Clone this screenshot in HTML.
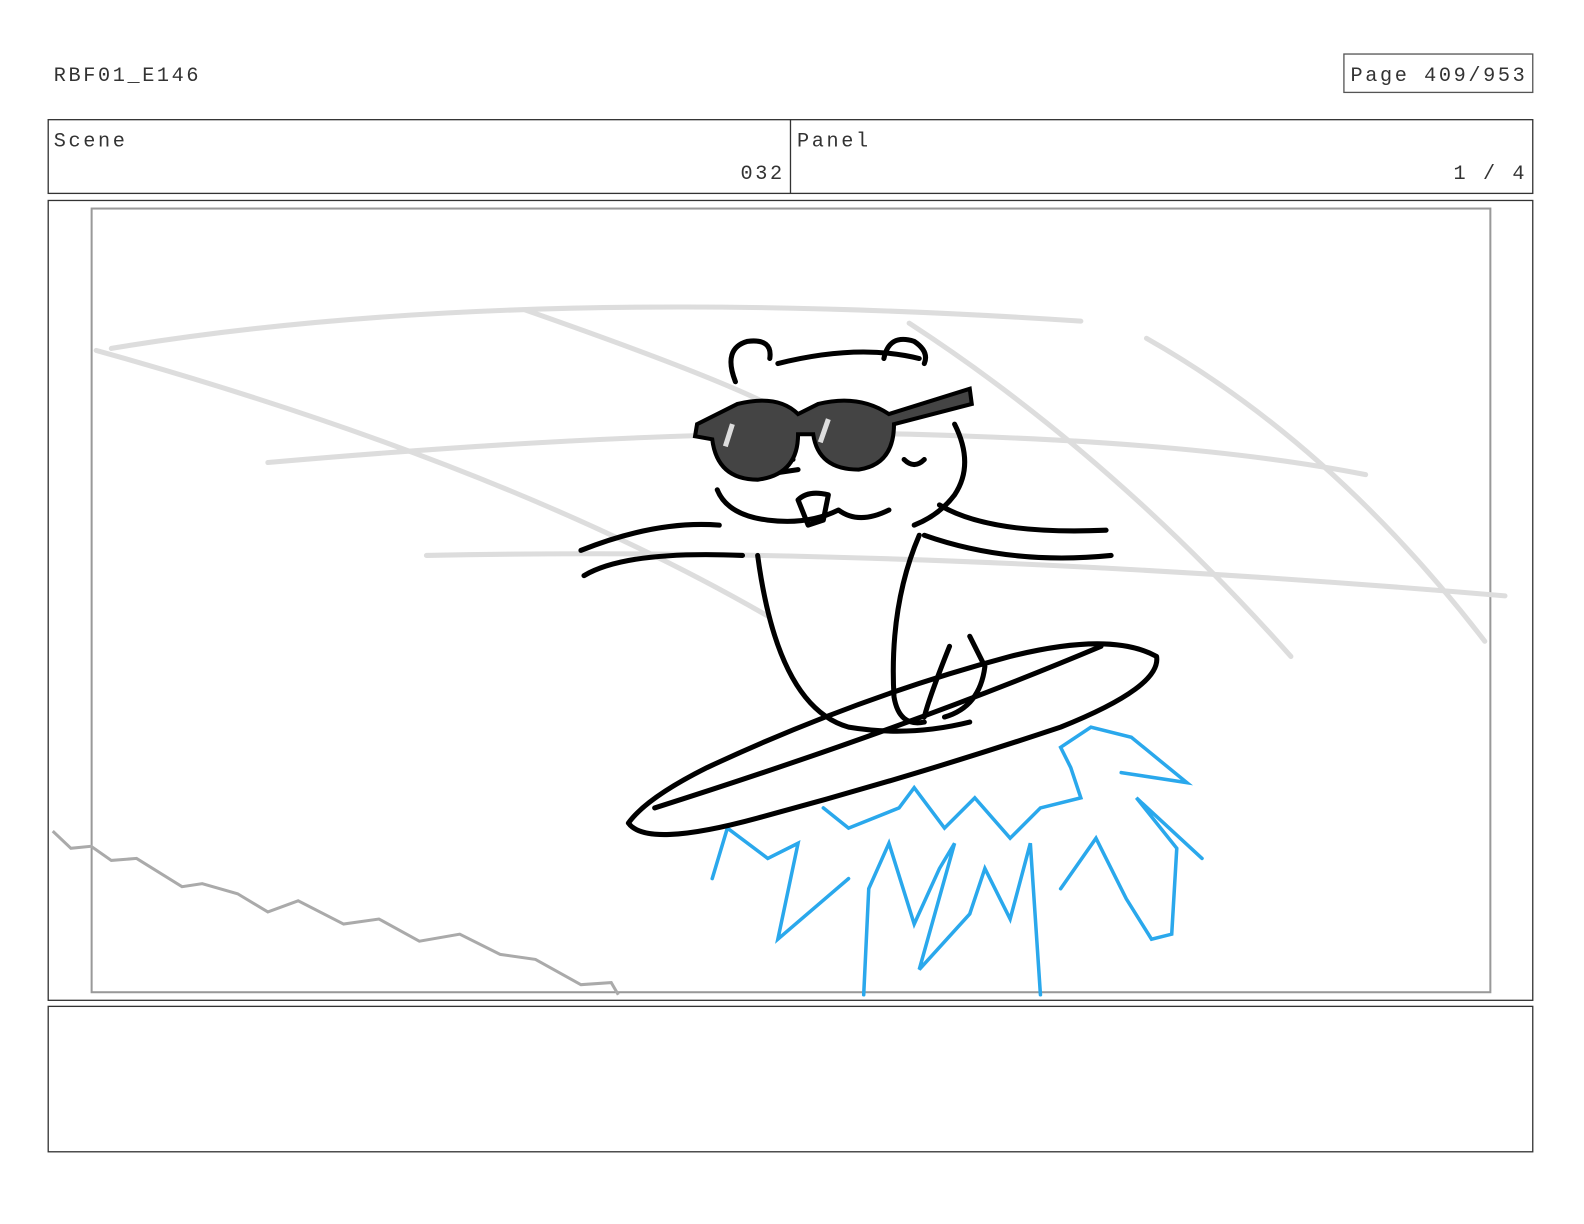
<!DOCTYPE html>
<html><head><meta charset="utf-8"><style>
html,body{margin:0;padding:0;background:#fff;width:1584px;height:1224px;overflow:hidden}
svg{display:block}
text{font-family:"Liberation Mono",monospace;fill:#333;letter-spacing:2.6px}
</style></head><body>
<svg width="1584" height="1224" viewBox="0 0 1568 1212" xmlns="http://www.w3.org/2000/svg">
<text x="53" y="80" font-size="20">RBF01_E146</text>
<rect x="1330.5" y="53.5" width="187" height="38" fill="none" stroke="#555" stroke-width="1.3"/>
<text x="1337" y="80" font-size="20">Page 409/953</text>
<rect x="47.5" y="118.5" width="1470" height="73" fill="none" stroke="#333" stroke-width="1.3"/>
<line x1="782.5" y1="118" x2="782.5" y2="192" stroke="#333" stroke-width="1.3"/>
<text x="53" y="145" font-size="20">Scene</text>
<text x="733" y="177" font-size="20">032</text>
<text x="789" y="145" font-size="20">Panel</text>
<text x="1439" y="177" font-size="20">1 / 4</text>
<rect x="47.5" y="198.5" width="1470" height="792" fill="none" stroke="#333" stroke-width="1.3"/>
<rect x="90.5" y="206.5" width="1385" height="776" fill="none" stroke="#999" stroke-width="2"/>
<rect x="47.5" y="996.5" width="1470" height="144" fill="none" stroke="#333" stroke-width="1.3"/>
<g fill="none" stroke="#ddd" stroke-width="5" stroke-linecap="round">
<path d="M110 345 Q500 280 1070 318"/>
<path d="M95 347 Q500 460 760 610"/>
<path d="M520 307 Q700 370 760 400"/>
<path d="M265 458 Q700 420 960 432 Q1200 440 1352 470"/>
<path d="M422 550 Q900 540 1490 590"/>
<path d="M900 320 Q1100 450 1278 650"/>
<path d="M1135 335 Q1320 440 1470 635"/>
</g>
<path d="M52 823 L70 840 L90 838 L110 852 L135 850 L180 878 L200 875 L235 885 L265 903 L295 892 L340 915 L375 910 L415 932 L455 925 L495 945 L530 950 L575 975 L605 973 L612 985" fill="none" stroke="#aaa" stroke-width="3"/>
<g fill="none" stroke="#2aa8ec" stroke-width="3.5" stroke-linecap="round">
<path d="M705 870 L720 820 L760 850 L790 835 L770 930 L840 870"/>
<path d="M855 985 L860 880 L880 835 L905 915 L930 860 L945 835 L910 960 L960 905 L975 860 L1000 910 L1020 835 L1030 985"/>
<path d="M1050 880 L1085 830 L1115 890 L1140 930 L1160 925 L1165 840 L1125 790 L1190 850"/>
<path d="M815 800 L840 820 L890 800 L905 780 L935 820 L965 790 L1000 830 L1010 820 L1030 800 L1070 790 L1060 760 L1050 740 L1080 720 L1120 730 L1175 775 L1110 765"/>
</g>
<g fill="none" stroke="#000" stroke-width="5" stroke-linecap="round" stroke-linejoin="round">
<path d="M622 815 Q640 790 700 760 Q850 690 1000 650 Q1100 625 1145 650 Q1150 680 1050 720 Q900 770 750 810 Q640 840 622 815 Z"/>
<path d="M648 800 Q900 720 1090 640"/>
<path d="M750 550 Q770 700 840 720 Q900 730 960 715"/>
<path d="M910 530 Q880 600 885 690 Q890 720 915 715"/>
<path d="M940 640 Q920 690 915 710 M960 630 L975 660 Q970 700 935 710"/>
<path d="M578 570 Q620 545 735 550 M575 545 Q650 515 712 520"/>
<path d="M930 500 Q980 530 1095 525 M915 530 Q1000 560 1100 550"/>
<path d="M770 360 Q850 340 910 355"/>
<path d="M728 378 Q715 345 740 338 Q765 335 762 355 M875 355 Q880 330 905 338 Q920 348 915 360"/>
<path d="M945 420 Q965 460 945 490 Q930 510 905 520"/>
<path d="M710 485 Q720 510 760 515 Q800 520 830 505 Q850 520 880 505"/>
<path d="M790 495 Q800 485 820 490 L815 515 L800 520 Z"/>
<path d="M765 455 L785 455 M770 468 L790 465"/>
<path d="M895 455 Q905 465 915 455"/>
</g>
<path d="M690 420 L730 400 Q770 390 790 410 L810 400 Q850 390 880 410 L960 385 L962 400 L885 420 Q885 460 850 465 Q810 465 805 430 L790 430 Q790 470 750 475 Q710 475 705 435 L688 432 Z" fill="#444" stroke="#000" stroke-width="4"/>
<path d="M725 420 L718 442 M820 415 L812 438" stroke="#ddd" stroke-width="5" fill="none"/>
</svg>
</body></html>
